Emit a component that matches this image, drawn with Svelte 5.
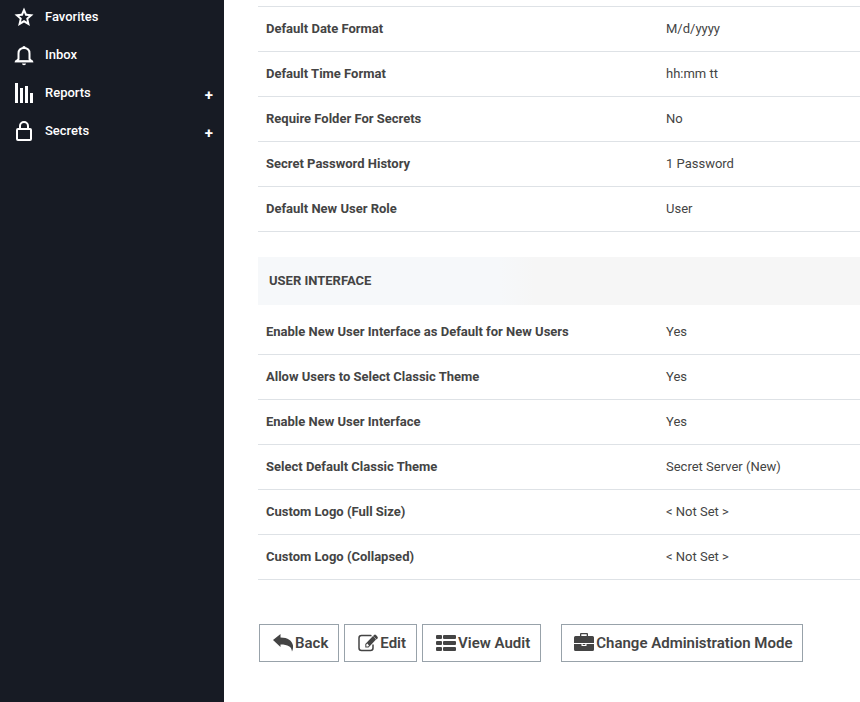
<script>
  const nav = [
    { name: 'Favorites', icon: 'star' },
    { name: 'Inbox', icon: 'bell' },
    { name: 'Reports', icon: 'bars', expandable: true },
    { name: 'Secrets', icon: 'lock', expandable: true }
  ];
  const general = [
    ['Default Date Format', 'M/d/yyyy'],
    ['Default Time Format', 'hh:mm tt'],
    ['Require Folder For Secrets', 'No'],
    ['Secret Password History', '1 Password'],
    ['Default New User Role', 'User']
  ];
  const ui = [
    ['Enable New User Interface as Default for New Users', 'Yes'],
    ['Allow Users to Select Classic Theme', 'Yes'],
    ['Enable New User Interface', 'Yes'],
    ['Select Default Classic Theme', 'Secret Server (New)'],
    ['Custom Logo (Full Size)', '< Not Set >'],
    ['Custom Logo (Collapsed)', '< Not Set >']
  ];
  const actions = [
    { name: 'Back', icon: 'back' },
    { name: 'Edit', icon: 'edit' },
    { name: 'View Audit', icon: 'list' },
    { name: 'Change Administration Mode', icon: 'case', apart: true }
  ];
</script>

{#snippet rows(items)}
  <table>
    <tbody>
      {#each items as [label, value]}
        <tr><th scope="row">{label}</th><td>{value}</td></tr>
      {/each}
    </tbody>
  </table>
{/snippet}

<div class="page">
  <nav>
    <ul>
      {#each nav as item}
        <li>
          <a href="#{item.name}">
            <svg viewBox="0 0 20 22" aria-hidden="true">
              {#if item.icon === 'star'}
                <path fill-rule="evenodd" d="M19.500 8.400l-6.800-.6L10 1.500 7.300 7.800l-6.800.6 5.200 4.500L4.100 20l5.900-3.600 5.900 3.600-1.600-7.100zM10 14l-3 1.800.8-3.500-2.600-2.200 3.500-.3L10 6.500l1.300 3.300 3.500.3-2.600 2.200.8 3.500z" />
              {:else if item.icon === 'bell'}
                <path class="line" d="M4.500 15V9.500C4.500 6 6.800 4 10 4s5.500 2 5.500 5.500V15l2 2.200h-15z" />
                <path d="M8.300 4a1.700 2 0 0 1 3.400 0zM1 16.400h18v1.800H1zM8 19.500h4a2 1.800 0 0 1-4 0z" />
              {:else if item.icon === 'bars'}
                <path d="M1 1h3v20H1zM6 6h3v15H6zM11 4h3v17h-3zM16 11h3v10h-3z" />
              {:else}
                <rect class="line" x="3" y="9" width="14" height="11" rx="1" />
                <path class="line" d="M6 9V6a4 4 0 0 1 8 0v3" />
              {/if}
            </svg>
            <span>{item.name}</span>
          </a>
          {#if item.expandable}
            <button class="expand" aria-label="Expand {item.name}">+</button>
          {/if}
        </li>
      {/each}
    </ul>
  </nav>

  <main>
    {@render rows(general)}
    <h2>User Interface</h2>
    {@render rows(ui)}

    <div class="actions">
      {#each actions as action}
        <button class:apart={action.apart}>
          <svg viewBox="0 0 20 18" aria-hidden="true">
            {#if action.icon === 'back'}
              <path d="M0 6L7.500 0v3.500c7.500 0 11.500 3 12.500 8 .2 2.500-.2 4.500-1 6-.500-5-4-7-11.500-7V13z" />
            {:else if action.icon === 'edit'}
              <path class="pen" d="M15 10.500V14q0 2.500-2.500 2.500h-9Q1 16.500 1 14V4q0-2.500 2.500-2.500h9l1 .2" />
              <path fill-rule="evenodd" d="M15 2l3 3.400-7.500 8H7.300V10zM8.300 10.500v1.900h1.800l.9-1-1.700-1.900zM16 1q1-1 2 0l1.500 1.700q.8 1 0 1.800l-.8.9-3.500-3.500z" />
            {:else if action.icon === 'list'}
              <rect y="1" width="6" height="4" rx="1" /><rect x="7" y="1" width="13" height="4" rx="1" />
              <rect y="7" width="6" height="4" rx="1" /><rect x="7" y="7" width="13" height="4" rx="1" />
              <rect y="13" width="6" height="4" rx="1" /><rect x="7" y="13" width="13" height="4" rx="1" />
            {:else}
              <path fill-rule="evenodd" d="M6 2V0q0-1 1-1h6q1 0 1 1v2h4.500Q20 2 20 3.500V9H0V3.500Q0 2 1.500 2zM7.300 2h5.400V.300H7.300zM0 10h7.500v2h5v-2H20v5.500q0 1.500-1.500 1.500h-17Q0 17 0 15.500zM8.700 10h2.600v1H8.700z" />
            {/if}
          </svg>
          <span>{action.name}</span>
        </button>
      {/each}
    </div>
  </main>
</div>

<style>
  :global(body) {
    margin: 0;
    background: #fff;
  }
  .page {
    display: flex;
    min-height: 100vh;
    overflow: hidden;
    font: 13px/20px Roboto, sans-serif;
    color: #444;
  }
  nav {
    flex: 0 0 224px;
    background: #171b24;
  }
  ul {
    margin: 0;
    padding: 0;
    list-style: none;
  }
  li {
    display: flex;
    height: 38px;
    padding: 0 11px 0 14px;
    align-items: flex-start;
    justify-content: space-between;
  }
  a {
    display: flex;
    flex: 1;
    gap: 11px;
    align-items: center;
    padding-top: 6px;
    color: #fff;
    text-decoration: none;
  }
  nav span {
    font-weight: 500;
  }
  nav svg {
    width: 20px;
    height: 22px;
    fill: #fff;
  }
  .line {
    fill: none;
    stroke: #fff;
    stroke-width: 2;
  }
  .expand {
    margin-top: 9px;
    padding: 0;
    border: 0;
    background: none;
    color: #fff;
    font: 700 15px/20px Roboto, sans-serif;
  }
  main {
    flex: 1;
    min-width: 0;
    padding: 6px 0 40px 34px;
  }
  table {
    width: 100%;
    border-collapse: separate;
    border-spacing: 0;
    table-layout: fixed;
  }
  th,
  td {
    height: 44px;
    padding: 0 8px;
    border-bottom: 1px solid #dee2e6;
    text-align: left;
    font-weight: 400;
  }
  th {
    width: 384px;
    font-weight: 700;
  }
  h2 + table {
    margin-top: 5px;
  }
  table:first-child {
    border-top: 1px solid #dee2e6;
  }
  h2 {
    margin: 25px 0 0;
    padding: 14px 11px;
    background: linear-gradient(90deg, #f6f8fa 40%, #f6f6f6 46%);
    font: 700 13px/20px Roboto, sans-serif;
    text-transform: uppercase;
  }
  .actions {
    display: flex;
    gap: 5px;
    padding: 44px 0 0 1px;
  }
  .actions button {
    display: flex;
    align-items: center;
    gap: 2px;
    height: 38px;
    padding: 0 10px 0 13px;
    border: 1px solid #98a2aa;
    background: #fff;
    color: #444;
    font: 600 15px/20px Roboto, sans-serif;
    white-space: nowrap;
  }
  .actions .apart {
    margin-left: 15px;
    padding-left: 12px;
  }
  .actions svg {
    width: 20px;
    height: 18px;
    overflow: visible;
    fill: #444;
  }
  .pen {
    fill: none;
    stroke: #444;
    stroke-width: 1.5;
  }
</style>
